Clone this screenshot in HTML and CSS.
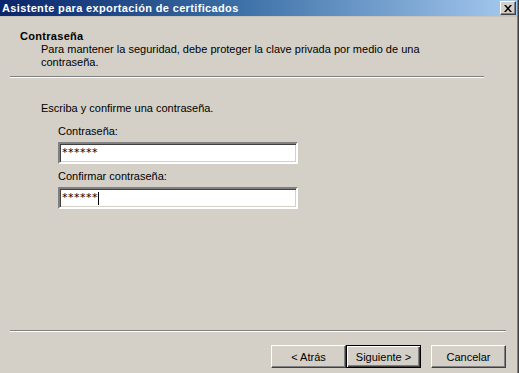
FILE: index.html
```html
<!DOCTYPE html>
<html>
<head>
  <title>Asistente para exportación de certificados</title>
  <link rel="stylesheet" href="styles.css">
</head>
<body>
  <div class="window">
    <div class="titlebar">
      <span class="title">Asistente para exportación de certificados</span>
      <button class="close-btn" title="Cerrar">
        <svg width="8" height="7" viewBox="0 0 8 7">
          <path d="M0 0h2l2 2.5L6 0h2L5 3.5 8 7H6L4 4.5 2 7H0l3-3.5z" fill="#000"/>
        </svg>
      </button>
    </div>

    <div class="header">
      <h1>Contraseña</h1>
      <p>Para mantener la seguridad, debe proteger la clave privada por medio de una<br>contraseña.</p>
    </div>
    <div class="rule rule-top"></div>

    <div class="content">
      <p class="intro">Escriba y confirme una contraseña.</p>
      <div class="field">
        <label for="pass1">Contraseña:</label>
        <div class="textbox" id="pass1">******</div>
      </div>
      <div class="field">
        <label for="pass2">Confirmar contraseña:</label>
        <div class="textbox" id="pass2">******<span class="caret"></span></div>
      </div>
    </div>

    <div class="rule rule-bottom"></div>
    <div class="buttons">
      <button class="btn">&lt; Atrás</button>
      <button class="btn default">Siguiente &gt;</button>
      <button class="btn cancel">Cancelar</button>
    </div>
  </div>
</body>
</html>
```

FILE: styles.css
```css
body {
  margin: 0;
  padding: 0;
  background-color: #d4d0c8;
  font-family: "Liberation Sans", Arial, sans-serif;
  font-size: 11px;
  color: #000;
}

.window {
  width: 517px;
  height: 373px;
  background-color: #d4d0c8;
  border-right: 1px solid #808080;
  box-shadow: 1px 0 0 #404040;
  display: flex;
  flex-direction: column;
  overflow: hidden;
}

/* barra de titulo estilo clasico */
.titlebar {
  height: 16px;
  display: flex;
  align-items: center;
  justify-content: space-between;
  background: linear-gradient(to right, #0a246a, #3a6ea5 45%, #a6caf0);
  border-bottom: 1px solid #c8c4bc;
}

.title {
  color: #fff;
  font-weight: bold;
  padding-left: 2px;
  line-height: 16px;
  letter-spacing: 0.35px;
  white-space: nowrap;
}

.close-btn {
  width: 16px;
  height: 14px;
  margin-right: 1px;
  padding: 0;
  display: flex;
  align-items: center;
  justify-content: center;
  background-color: #d4d0c8;
  border: 1px solid;
  border-color: #fff #404040 #404040 #fff;
  box-shadow: inset -1px -1px 0 #808080;
}

.header {
  padding: 12px 0 0 20px;
  height: 47px;
}

.header h1 {
  margin: 0;
  font-size: 11px;
  font-weight: bold;
  line-height: 14px;
  letter-spacing: 0.3px;
}

.header p {
  margin: 0 0 0 21px;
  line-height: 13px;
}

.rule {
  border-top: 1px solid #808080;
  border-bottom: 1px solid #fff;
  box-sizing: border-box;
  height: 2px;
}

.rule-top {
  margin: 0 33px 0 10px;
}

.content {
  padding: 24px 0 0 41px;
  flex: 1;
}

.intro {
  margin: 0 0 10px 0;
  line-height: 13px;
}

.field {
  margin-left: 17px;
  margin-bottom: 6px;
}

.field label {
  display: block;
  line-height: 13px;
  margin-bottom: 4px;
}

.textbox {
  width: 240px;
  height: 22px;
  box-sizing: border-box;
  background-color: #fff;
  border: 2px solid;
  border-color: #808080 #fff #fff #808080;
  box-shadow: inset 1px 1px 0 #404040, inset -1px -1px 0 #d4d0c8;
  padding: 0 0 2px 2px;
  display: flex;
  align-items: center;
  font-family: "DejaVu Sans", sans-serif;
  font-size: 11px;
  line-height: 13px;
  letter-spacing: 0.5px;
}

.caret {
  display: inline-block;
  width: 1px;
  height: 13px;
  background-color: #000;
  margin-top: 2px;
}

.rule-bottom {
  margin: 0 11px 13px 10px;
}

.buttons {
  display: flex;
  justify-content: flex-end;
  padding: 0 11px 5px 0;
}

.btn {
  width: 75px;
  height: 23px;
  padding: 0;
  font-family: "Liberation Sans", Arial, sans-serif;
  font-size: 11px;
  color: #000;
  background-color: #d4d0c8;
  border: 1px solid;
  border-color: #fff #404040 #404040 #fff;
  box-shadow: inset -1px -1px 0 #808080;
}

.btn.default {
  border: 1px solid #000;
  box-shadow: inset 1px 1px 0 #fff, inset -1px -1px 0 #404040, inset -2px -2px 0 #808080;
}

.btn.cancel {
  margin-left: 10px;
}
```
